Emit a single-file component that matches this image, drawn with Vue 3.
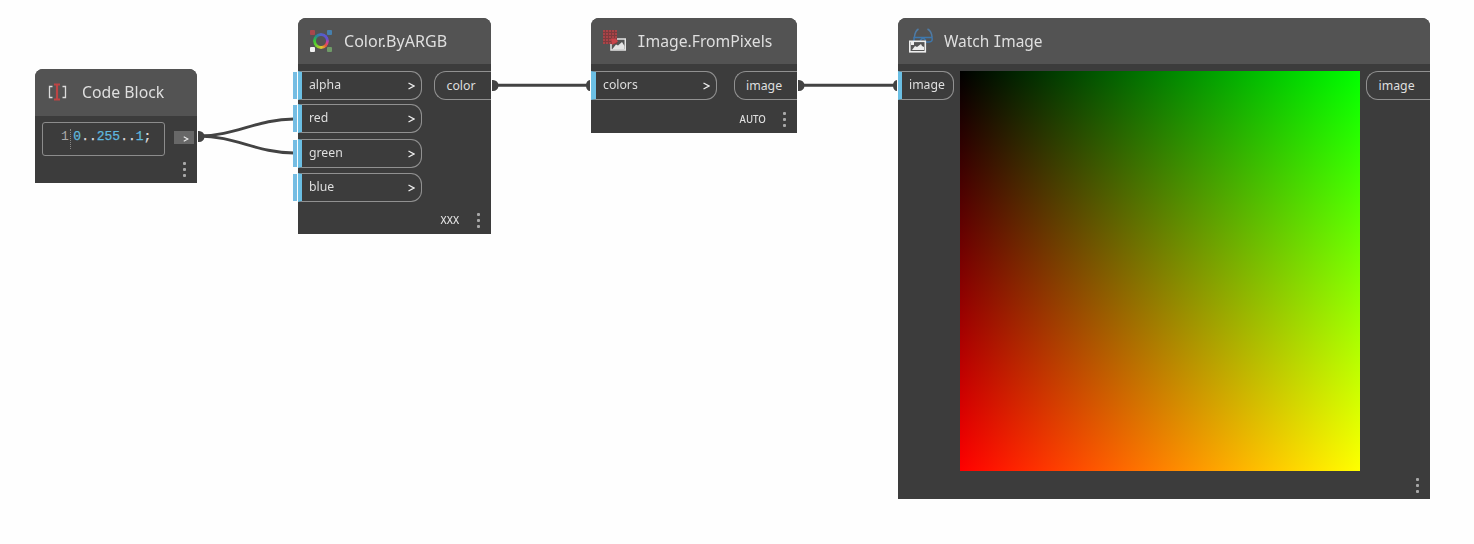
<script setup>
const nodes = [
  {
    id: 'code', title: 'Code Block', fit: 'title-code', code: true, inputs: [], output: null, lacing: '',
  },
  {
    id: 'color', title: 'Color.ByARGB', fit: 'title-color', stubs: true, output: 'color', lacing: 'XXX',
    inputs: ['alpha', 'red', 'green', 'blue'], chevron: true,
  },
  {
    id: 'pixels', mono: 'I', title: 'mage.FromPixels', fit: 'title-pixels', output: 'image', lacing: 'AUTO',
    inputs: ['colors'], chevron: true,
  },
  {
    id: 'watch', title: 'Watch ', mono: 'I', rest: 'mage', fit: 'title-watch', preview: true, output: 'image', lacing: '',
    inputs: ['image'],
  },
]
</script>

<template>
  <main class="canvas">
    <svg class="wires" width="1474" height="544" viewBox="0 0 1474 544">
      <g fill="none" stroke="#434343" stroke-width="3">
        <path d="M199 136C235 136 257 119 294 119" />
        <path d="M199 136C235 136 257 153 294 153" />
        <path d="M494 85.300H590M800 85.300H897" />
      </g>
      <g fill="#434343">
        <path d="M198 131h1a5 5 0 0 1 0 11h-1zM492 80h1a5 5 0 0 1 0 11h-1zM798 80h1a5 5 0 0 1 0 11h-1z" />
        <path d="M590 80a4 5.500 0 0 0 0 11zM897 80a4 5.500 0 0 0 0 11z" />
      </g>
    </svg>

    <section v-for="n in nodes" :key="n.id" class="node" :class="n.id">
      <header>
        <svg v-if="n.id === 'code'" class="icon" viewBox="0 0 26 26">
          <path d="M7.500 7.500H4.500v11h3M17.500 7.500h3v11h-3" fill="none" stroke="#dcdcdc" stroke-width="1.300" />
          <path d="M9 5.500h6M9 20.500h6M12 6v14" fill="none" stroke="#bd4444" stroke-width="2.200" />
        </svg>
        <div v-else-if="n.id === 'color'" class="icon argb"><i /><i /><b /><i /><i /></div>
        <svg v-else-if="n.id === 'pixels'" class="icon" viewBox="0 0 26 26">
          <rect x="3" y="2" width="14" height="14" fill="#7d3b3e" />
          <path d="M3 3h14M3 6h14M3 9h14M3 12h9M3 15h8" stroke="#b8474b" stroke-width="1.600" stroke-dasharray="2 1" />
          <path d="M17 11h8.300v11H11v-6" fill="none" stroke="#e4e4e4" stroke-width="1.500" />
          <path d="M12 21.500l4-5 2 1 4-3.500 2.500 4v3.500z" fill="#e4e4e4" />
          <path d="M11 10.500h5l2 3-6 3.500z" fill="#c9444a" />
        </svg>
        <svg v-else class="icon" viewBox="0 0 26 26">
          <path d="M11.500 1Q8 3 7.500 9M20.500 1q4 2 4.500 8" fill="none" stroke="#4f7ba5" stroke-width="1.500" />
          <path d="M6.500 9.500h19M7 9v5M13 12.500l3-2.500 3 2.500M25 9.500q1 4.500-3 4.500h-3" fill="none" stroke="#3f78ad" stroke-width="1.500" />
          <rect x="2.800" y="13.300" width="15.500" height="10.500" fill="#555" stroke="#eee" stroke-width="1.600" />
          <path d="M5 22l3-4 2 1 4-3 1 2 2 1v3z" fill="#eee" />
          <path d="M4 14h3v3H4z" fill="#eee" />
        </svg>
        <h2 :class="n.fit"><template v-if="n.id === 'pixels'"><span class="slab">{{ n.mono }}</span>{{ n.title }}</template><template v-else>{{ n.title }}<span v-if="n.mono" class="slab">{{ n.mono }}</span>{{ n.rest }}</template></h2>
      </header>

      <div class="body">
        <div v-if="n.code" class="editor">
          <span class="line">1</span><code><em>0</em>..<em>255</em>..<em>1</em>;</code>
        </div>
        <div v-if="n.inputs.length" class="inputs">
          <div v-for="p in n.inputs" :key="p" class="input" :class="{ stub: n.stubs }">
            <span>{{ p }}</span><svg v-if="n.chevron" class="chevron" viewBox="0 0 7 8"><path d="M.5 1l5.500 3L.5 7" /></svg>
          </div>
        </div>
        <div v-if="n.preview" class="preview" />
        <div v-if="n.output" class="output">{{ n.output }}</div>
        <div v-if="n.code" class="code-out"><svg class="chevron" viewBox="0 0 7 8"><path d="M.5 1l5.500 3L.5 7" /></svg></div>
      </div>

      <footer><span>{{ n.lacing }}</span><div class="dots"><i /><i /><i /></div></footer>
    </section>
  </main>
</template>

<style>
body { margin: 0; background: #fefefe; }
</style>

<style scoped>
.canvas { position: relative; width: 1474px; height: 544px; overflow: hidden; background: #fefefe; font-family: "Noto Sans", sans-serif; color: #dfdfdf; }
.wires { position: absolute; inset: 0; }
.node { position: absolute; box-sizing: border-box; display: flex; flex-direction: column; background: #3c3c3c; border-radius: 8px 8px 0 0; }
.code { left: 35px; top: 69px; width: 162px; height: 114px; }
.color { left: 298px; top: 18px; width: 193px; height: 216px; }
.pixels { left: 591px; top: 18px; width: 206px; height: 115px; }
.watch { left: 898px; top: 18px; width: 532px; height: 481px; }
header { flex: none; height: 46px; display: flex; align-items: center; gap: 11px; padding-left: 9px; background: #535353; border-radius: 8px 8px 0 0; box-sizing: border-box; }
.code header { height: 47px; padding: 0 0 1px 10px; gap: 11px; }
.color header { padding-left: 10px; gap: 10px; }
.icon { width: 26px; height: 26px; flex: none; }
h2 { margin: 0; font-size: 17px; line-height: 24px; font-weight: 400; white-space: pre; transform-origin: left center; }
.title-code { transform: scaleX(.93); }
.title-color { transform: scaleX(.945); }
.title-pixels { transform: scaleX(.925); }
.title-watch { transform: scaleX(.91); }
.slab { font-family: "DejaVu Sans Mono", monospace; font-size: 16px; margin: 0 -.5px; }
.pixels .slab { margin-left: 0; }
.argb { display: grid; grid-template-columns: 5px 12px 5px; grid-template-rows: 5px 12px 5px; box-sizing: border-box; padding: 2px; }
.argb i { width: 5px; height: 5px; background: #a9474c; border-radius: 1px; }
.argb i:nth-of-type(2) { grid-column: 3; background: #4680ae; }
.argb i:nth-of-type(3) { grid-column: 1; grid-row: 3; background: #f2f2f2; }
.argb i:nth-of-type(4) { grid-column: 3; grid-row: 3; background: #6f9b67; }
.argb b { grid-column: 2; grid-row: 2; width: 16px; height: 16px; margin: -2px; border-radius: 50%; background: conic-gradient(#5361c8, #654fd2 20%, #d43e91 29%, #e5543b 37%, #dfc52e 48%, #62d32d 65%, #36bd3b 77%, #248b90 88%, #5361c8); mask: radial-gradient(circle, transparent 4.500px, #000 5.500px); }
.body { display: flex; align-items: flex-start; padding-top: 7px; }
.inputs { display: grid; gap: 5px; }
.color .input:nth-child(2) { margin-top: -1px; margin-bottom: 1px; }
.input { display: flex; align-items: center; justify-content: space-between; box-sizing: border-box; width: 124px; height: 29px; padding: 0 6px 2px 7px; border: 1px solid #919191; border-left: 4px solid #6bbfe4; border-radius: 0 11px 11px 0; font-size: 12.500px; line-height: 20px; position: relative; }
.input span { transform: scaleX(.98); transform-origin: left; }
.pixels .input { width: 126px; border-left-width: 5px; padding-left: 7px; }
.watch .input { width: 56px; }
.stub::before { content: ""; position: absolute; left: -9px; top: 0; width: 4px; height: 27px; background: #75bde3; }
.chevron { width: 7px; height: 8px; fill: none; stroke: #ededed; stroke-width: 1.400; position: relative; top: 1px; }
.output { margin-left: auto; box-sizing: border-box; width: 57px; height: 29px; padding-left: 11.500px; border: 1px solid #919191; border-right: 0; border-radius: 12px 0 0 12px; font-size: 12.300px; line-height: 27px; }
.pixels .output { width: 63px; padding-left: 11px; }
.watch .output { width: 64px; }
.preview { width: 400px; height: 400px; margin-left: 6px; background: linear-gradient(to right, #000, #0f0), linear-gradient(to bottom, #000, #f00); background-blend-mode: screen; }
.editor { display: flex; width: 123px; height: 34px; box-sizing: border-box; margin-left: 7px; margin-top: -1px; padding-left: 18px; border: 1px solid #8c8c8c; border-radius: 3px; font: 13px/28px "Liberation Mono", monospace; }
.editor .line { color: #aaa; height: 20px; margin-top: 6px; line-height: 16px; padding-right: 1px; border-right: 1px dotted #888; }
code { font: inherit; padding-left: 2.500px; -webkit-text-stroke: .25px currentColor; }
code em { font-style: normal; color: #5fb8df; }
.code-out { width: 20px; height: 13px; margin: 8px 0 0 9px; background: #686868; display: flex; justify-content: center; align-items: center; padding-left: 4px; box-sizing: border-box; }
.code-out .chevron { width: 6px; height: 6px; }
footer { display: flex; justify-content: flex-end; align-items: center; gap: 18px; height: 16px; margin-top: auto; padding: 0 11px 6px 0; font-size: 11px; line-height: 16px; font-weight: 500; }
footer span { transform: scaleX(.88); transform-origin: right; }
.pixels footer span { position: relative; left: 1px; }
.color footer span { transform: scaleX(.92); }
.dots { display: grid; gap: 3px; }
.dots i { width: 3px; height: 3px; border-radius: 1px; background: #a8a8a8; }
</style>
